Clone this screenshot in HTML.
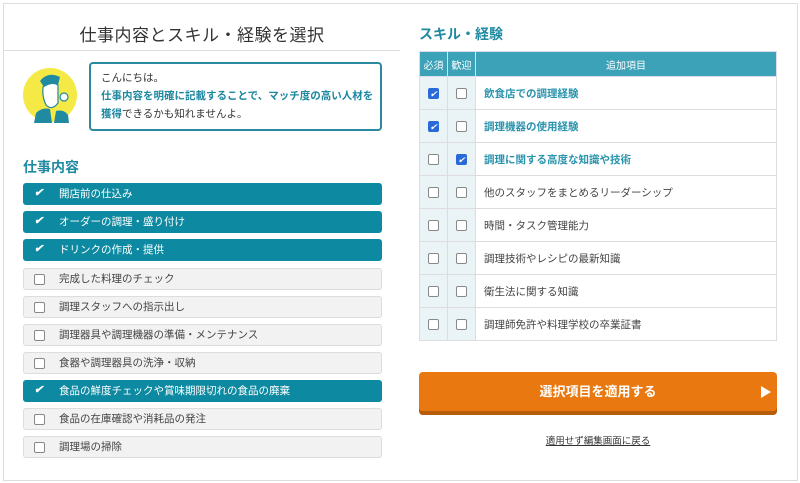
<!DOCTYPE html>
<html><head><meta charset="utf-8"><style>
*{box-sizing:border-box;margin:0;padding:0}
body{width:800px;height:483px;background:#fff;font-family:"Liberation Sans","Noto Sans CJK JP",sans-serif;position:relative;overflow:hidden;color:#333}
.a{position:absolute}
.frame{left:3px;top:3px;width:795px;height:478px;border:1px solid #ddd}
.title{left:4px;top:21px;width:396px;text-align:center;font-size:17px;color:#333;letter-spacing:0.5px}
.hr{left:4px;top:50px;width:396px;height:1px;background:#ddd}
.bub{left:89px;top:62px;width:293px;height:69px;border:2px solid #2b8aa0;border-radius:4px;font-size:10.5px;line-height:18px;padding:5px 0 0 10px;font-weight:bold;color:#1d87a0}
.bub span{color:#333;font-weight:normal}
.sec{font-size:14px;font-weight:bold;color:#1f8aa2}
.row{left:23px;width:359px;height:22px;border:1px solid #ddd;border-radius:3px;background:#f2f2f2;font-size:10.5px;line-height:20px;padding-left:35px;color:#444}
.row.on{background:#0d8aa1;border-color:#0d8aa1;color:#fff}
.cb{position:absolute;left:10px;top:5px;width:11px;height:11px;border:1px solid #888;border-radius:2px;background:#fff}
.on .cb{border:none;background:none;color:#fff;font-size:11px;line-height:11px;top:4px;font-weight:bold}
table{position:absolute;left:419px;top:51px;width:358px;border-collapse:collapse;font-size:10.5px}
th{background:#3ba2b8;color:#fff;font-weight:normal;height:25px;border:1px solid #dde;font-size:10px}
td{height:33px;border:1px solid #ddd;color:#444}
td.c{width:28px;background:#eaf4f7;text-align:center}
td.t{padding-left:8px}
td.bl{color:#2a93ad;font-weight:bold}
.b{display:inline-block;width:11px;height:11px;border:1px solid #888;border-radius:2px;background:#fff;vertical-align:middle}
.b.on{background:#2a6ad8;border-color:#2a6ad8;color:#fff;font-size:9px;line-height:10px;text-align:center}
.btn{left:419px;top:372px;width:358px;height:43px;background:#e8780f;border-radius:4px;box-shadow:inset 0 -4px 0 #b85c08;color:#fff;font-weight:bold;font-size:13px;text-align:center;line-height:40px}
.tri{right:6px;top:14px;width:0;height:0;border-left:10px solid #fff;border-top:6px solid transparent;border-bottom:6px solid transparent}
.link{left:419px;top:433px;width:358px;text-align:center;font-size:9.5px;text-decoration:underline;color:#333}
</style></head><body>
<div class="a frame"></div>
<div class="a title">仕事内容とスキル・経験を選択</div>
<div class="a hr"></div>
<svg class="a" style="left:22px;top:67px" width="56" height="56" viewBox="0 0 56 56">
<circle cx="28" cy="28" r="27" fill="#f5ea45"/>
<path d="M12 56 L14 46 Q20 40 28 42 L30 56Z M32 56 L34 44 Q42 42 46 48 L47 56Z" fill="#1f8aa0"/>
<path d="M18 14 Q26 4 38 10 L36 18 Q30 14 22 20Z" fill="#1f8aa0"/>
<path d="M21 20 Q30 14 36 18 L36 36 Q30 44 24 38 Q20 30 21 20Z" fill="#fff" stroke="#1f8aa0" stroke-width="1.2"/>
<circle cx="42" cy="30" r="4" fill="#fff" stroke="#1f8aa0" stroke-width="1.2"/>
</svg>
<div class="a bub"><span>こんにちは。</span><br>仕事内容を明確に記載することで、マッチ度の高い人材を<br>獲得<span>できるかも知れませんよ。</span></div>
<div class="a sec" style="left:23px;top:157px">仕事内容</div>
<div class="a row on" style="top:183px"><i class="cb">✔</i>開店前の仕込み</div>
<div class="a row on" style="top:211px"><i class="cb">✔</i>オーダーの調理・盛り付け</div>
<div class="a row on" style="top:239px"><i class="cb">✔</i>ドリンクの作成・提供</div>
<div class="a row" style="top:268px"><i class="cb"></i>完成した料理のチェック</div>
<div class="a row" style="top:296px"><i class="cb"></i>調理スタッフへの指示出し</div>
<div class="a row" style="top:324px"><i class="cb"></i>調理器具や調理機器の準備・メンテナンス</div>
<div class="a row" style="top:352px"><i class="cb"></i>食器や調理器具の洗浄・収納</div>
<div class="a row on" style="top:380px"><i class="cb">✔</i>食品の鮮度チェックや賞味期限切れの食品の廃棄</div>
<div class="a row" style="top:408px"><i class="cb"></i>食品の在庫確認や消耗品の発注</div>
<div class="a row" style="top:436px"><i class="cb"></i>調理場の掃除</div>
<div class="a sec" style="left:419px;top:24px">スキル・経験</div>
<table>
<tr><th>必須</th><th>歓迎</th><th>追加項目</th></tr>
<tr><td class="c"><i class="b on">✔</i></td><td class="c"><i class="b"></i></td><td class="t bl">飲食店での調理経験</td></tr>
<tr><td class="c"><i class="b on">✔</i></td><td class="c"><i class="b"></i></td><td class="t bl">調理機器の使用経験</td></tr>
<tr><td class="c"><i class="b"></i></td><td class="c"><i class="b on">✔</i></td><td class="t bl">調理に関する高度な知識や技術</td></tr>
<tr><td class="c"><i class="b"></i></td><td class="c"><i class="b"></i></td><td class="t">他のスタッフをまとめるリーダーシップ</td></tr>
<tr><td class="c"><i class="b"></i></td><td class="c"><i class="b"></i></td><td class="t">時間・タスク管理能力</td></tr>
<tr><td class="c"><i class="b"></i></td><td class="c"><i class="b"></i></td><td class="t">調理技術やレシピの最新知識</td></tr>
<tr><td class="c"><i class="b"></i></td><td class="c"><i class="b"></i></td><td class="t">衛生法に関する知識</td></tr>
<tr><td class="c"><i class="b"></i></td><td class="c"><i class="b"></i></td><td class="t">調理師免許や料理学校の卒業証書</td></tr>
</table>
<div class="a btn">選択項目を適用する<div class="a tri"></div></div>
<div class="a link">適用せず編集画面に戻る</div>
</body></html>
